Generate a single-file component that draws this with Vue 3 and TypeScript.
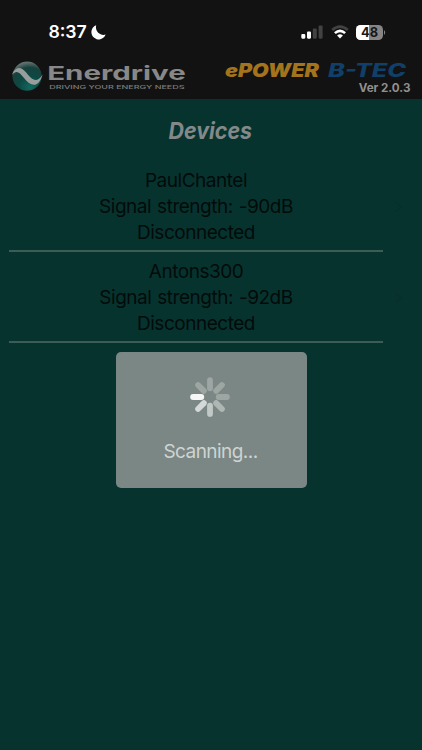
<script setup lang="ts">
interface Device {
  name: string
  signal: number
  status: string
}

const devices: Device[] = [
  { name: 'PaulChantel', signal: -90, status: 'Disconnected' },
  { name: 'Antons300', signal: -92, status: 'Disconnected' },
]

// Opacity of each spinner blade, clockwise from the top
const blades: number[] = [0.26, 0.26, 0.26, 0.4, 0.54, 0.68, 0.92, 0.26]
</script>

<template>
  <div class="screen">
    <header class="top">
      <div class="status">
        <div class="clock">
          <svg class="time" width="40" height="24" viewBox="0 0 40 24">
            <text x="0.4" y="18.4" textLength="38.4" lengthAdjust="spacingAndGlyphs">8:37</text>
          </svg>
          <svg width="15" height="15" viewBox="0 0 15 15">
            <path d="M5.2 .3A7.3 7.3 0 1 0 14.6 9.6C9.4 11.4 3.6 6 5.2 .3Z" fill="#fff" />
          </svg>
        </div>
        <div class="indicators">
          <svg width="22" height="14" viewBox="0 0 22 14">
            <rect x="0.3" y="9" width="4" height="4.7" rx="1.1" fill="#fff" />
            <rect x="6" y="6.5" width="4" height="7.2" rx="1.1" fill="#fff" />
            <rect x="11.8" y="3.5" width="4" height="10.2" rx="1.1" fill="#424242" />
            <rect x="17.6" y="0.5" width="4" height="13.2" rx="1.1" fill="#424242" />
          </svg>
          <svg class="wifi" width="18" height="14" viewBox="0 0 18 14" fill="none" stroke-width="2.6">
            <path d="M1.2 5Q9 -1.8 16.8 5" stroke="#424242" />
            <path d="M3.9 8.1Q9 3.5 14.1 8.1" stroke="#fff" />
            <path d="M6.1 10.5Q9 7.9 11.9 10.5L9 13.4Z" fill="#fff" />
          </svg>
          <svg class="battery" width="31" height="15" viewBox="0 0 31 15">
            <defs>
              <clipPath id="cell"><rect width="27" height="15" rx="4.6" /></clipPath>
            </defs>
            <g clip-path="url(#cell)">
              <rect width="27" height="15" fill="#858585" />
              <rect width="13" height="15" fill="#fff" />
            </g>
            <path d="M28 5Q30.4 7.5 28 10Z" fill="#858585" />
            <text x="5" y="12.4" textLength="17" lengthAdjust="spacingAndGlyphs">48</text>
          </svg>
        </div>
      </div>
      <div class="brand">
        <svg class="enerdrive" width="177" height="36" viewBox="0 0 177 36">
          <defs>
            <radialGradient id="orb" cx=".6" cy=".88" r=".85">
              <stop offset="0" stop-color="#12695f" />
              <stop offset=".45" stop-color="#0c4943" />
              <stop offset=".8" stop-color="#18413e" />
              <stop offset="1" stop-color="#5c706d" />
            </radialGradient>
          </defs>
          <circle cx="17.1" cy="16.2" r="14.6" fill="url(#orb)" />
          <path d="M1.8 14.8C5.5 6.4 10.8 6 16.4 12.8C21.6 19.4 26.4 24.2 32.7 14.4C28.4 28.4 21 27 13.8 17.8C9.2 11.8 6.4 9.8 1.8 14.8Z" fill="#999e9d" />
          <text class="name" x="37.2" y="20" textLength="138.6" lengthAdjust="spacingAndGlyphs">Enerdrive</text>
          <text class="tagline" x="39.2" y="28.8" textLength="135.3" lengthAdjust="spacingAndGlyphs">DRIVING YOUR ENERGY NEEDS</text>
        </svg>
        <div class="product">
          <svg class="models" width="196" height="26" viewBox="0 -2 196 26">
            <text class="epower" x="9" y="17" textLength="94" lengthAdjust="spacingAndGlyphs">ePOWER</text>
            <text class="btec" x="112" y="16.7" textLength="78" lengthAdjust="spacingAndGlyphs">B-TEC</text>
          </svg>
          <svg class="version" width="54" height="14" viewBox="0 0 54 14">
            <text x="0.7" y="10" textLength="51.7" lengthAdjust="spacingAndGlyphs">Ver 2.0.3</text>
          </svg>
        </div>
      </div>
    </header>

    <main>
      <svg class="title" width="422" height="32" viewBox="0 0 422 32">
        <text x="168.5" y="23.9" textLength="83.5" lengthAdjust="spacingAndGlyphs">Devices</text>
      </svg>
      <ul class="devices">
        <li v-for="device in devices" :key="device.name">
          <div class="info">
            <p>{{ device.name }}</p>
            <p>Signal strength: {{ device.signal }}dB</p>
            <p>{{ device.status }}</p>
          </div>
          <svg class="chevron" width="10" height="12" viewBox="0 0 10 12">
            <path d="M2 1.5L7.5 6L2 10.5" fill="none" stroke="#082f2b" stroke-width="1.5" />
          </svg>
        </li>
      </ul>
      <section class="scanning">
        <svg width="40" height="40" viewBox="-20 -20 40 40">
          <rect
            v-for="(opacity, index) in blades"
            :key="index"
            x="-2.9"
            y="-19.8"
            width="5.8"
            height="14"
            rx="2.9"
            fill="#fff"
            :fill-opacity="opacity"
            :transform="`rotate(${index * 45})`"
          />
        </svg>
        <p>Scanning...</p>
      </section>
    </main>
  </div>
</template>

<style>
body {
  background: #07332f;
}
</style>

<style scoped>
.screen {
  height: 750px;
  overflow: hidden;
  background: #07332f;
  font-family: Inter, "Liberation Sans", sans-serif;
}

.top {
  height: 99px;
  background: #121212;
}

.status {
  box-sizing: border-box;
  height: 58px;
  padding: 22px 35px 0 48px;
  display: flex;
  justify-content: space-between;
}

.clock {
  height: 20px;
  display: flex;
  align-items: center;
  gap: 3px;
}

.time text {
  font-size: 17.8px;
  font-weight: 600;
  fill: #fff;
}

.indicators {
  height: 20px;
  display: flex;
  align-items: center;
}

.wifi {
  margin-left: 8px;
}

.battery {
  margin-left: 7px;
}

.battery text {
  font-size: 13.5px;
  font-weight: 700;
  fill: #171717;
}

.brand {
  display: flex;
  justify-content: space-between;
  padding: 2px 10px 0;
}

.name {
  font-size: 18.8px;
  font-weight: 700;
  fill: #888;
}

.tagline {
  font-size: 5.3px;
  font-weight: 500;
  fill: #7b7b7b;
}

.product {
  display: flex;
  flex-direction: column;
  align-items: flex-end;
}

.models {
  margin: -2px 0;
  overflow: visible;
}

.epower,
.btec {
  font-size: 18.4px;
  font-style: italic;
  font-weight: 900;
}

.epower {
  fill: #a3741c;
}

.btec {
  font-weight: 800;
  fill: #104069;
}

.version text {
  font-size: 11.3px;
  font-weight: 700;
  fill: #909090;
}

main {
  display: flex;
  flex-direction: column;
}

.title {
  margin-top: 16px;
}

.title text {
  font-size: 22.5px;
  font-style: italic;
  font-weight: 700;
  fill: #838988;
}

.devices {
  list-style: none;
  margin: 14px 0 0;
  padding: 0 0 0 9px;
}

.devices li {
  height: 91px;
  display: flex;
  align-items: center;
}

.info {
  box-sizing: border-box;
  width: 374px;
  height: 100%;
  padding-top: 7px;
  border-bottom: 2px solid #3c5c56;
  text-align: center;
}

.info p {
  margin: 0;
  font-size: 19px;
  line-height: 26px;
  color: #020b0a;
  letter-spacing: -0.47px;
  word-spacing: 1px;
}

.chevron {
  margin-left: 11px;
}

.scanning {
  box-sizing: border-box;
  align-self: center;
  width: 191px;
  height: 136px;
  margin-top: 9px;
  padding-top: 25px;
  border-radius: 5px;
  background: #7b8784;
  display: flex;
  flex-direction: column;
  align-items: center;
}

.scanning svg {
  margin-right: 3px;
}

.scanning p {
  margin: 22px 1px 0 0;
  font-size: 19px;
  line-height: 26px;
  color: #ced4d2;
  letter-spacing: -0.55px;
}
</style>
